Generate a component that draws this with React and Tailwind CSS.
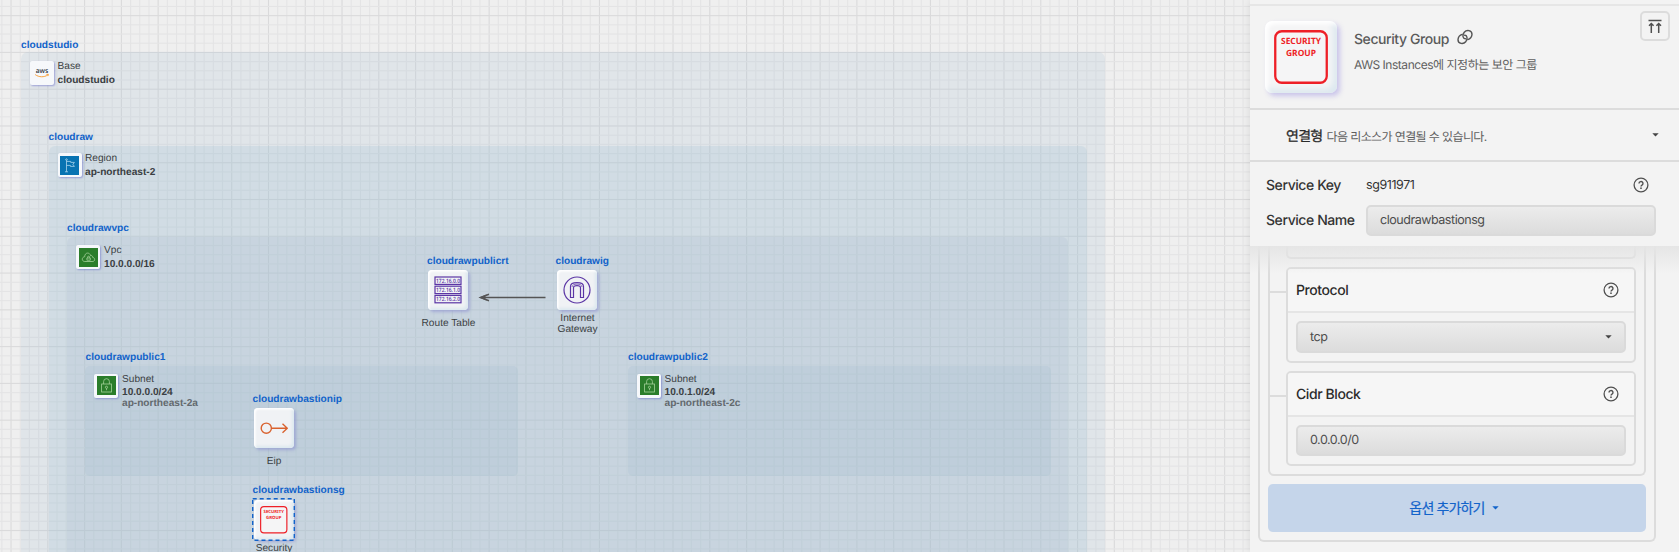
import React from "react";

const PITCH = 9.194;
const steps = (start, end) => {
  const out = [];
  for (let i = 0; start + i * PITCH < end; i++) out.push(i);
  return out;
};

function Grid() {
  return (
    <svg className="absolute inset-0" width="1250" height="552">
      {steps(1.6, 1250).map((i) => (
        <rect key={i} x={1.6 + i * PITCH - 0.3} y="0" width="1.1" height="552" fill={i % 4 === 1 ? "#dadadb" : "#e4e4e5"} />
      ))}
      {steps(6.2, 552).map((i) => (
        <rect key={i} x="0" y={6.2 + i * PITCH - 0.3} width="1250" height="1.1" fill={i % 4 === 1 ? "#dadadb" : "#e4e4e5"} />
      ))}
    </svg>
  );
}

const Name = ({ at, children }) => (
  <div className={`absolute pt-px whitespace-nowrap text-[10.15px] leading-[10px] font-bold text-[#1263ca] ${at}`}>{children}</div>
);

const Tag = ({ at, title, value, zone, tight }) => (
  <div className={`absolute pt-px whitespace-nowrap text-[10.15px] leading-[10px] text-[#3b3f43] ${at}`}>
    <div>{title}</div>
    <div className={`font-bold ${tight ? "mt-[3px]" : "mt-[4px]"}`}>{value}</div>
    {zone && <div className="mt-px font-bold text-[#63696e]">{zone}</div>}
  </div>
);

const SmallCard = ({ at, children }) => (
  <div className={`absolute flex h-6 w-6 items-center justify-center rounded-[2px] bg-[#f6f8fb] shadow-[1px_1px_2px_rgba(110,115,200,0.6)] ${at}`}>
    {children}
  </div>
);

const Card = ({ at, children }) => (
  <div className={`absolute flex h-10 w-10 items-center justify-center rounded-[4px] bg-[#f0f2f5] shadow-[2px_2px_3px_rgba(125,125,205,0.45),inset_1.5px_1.5px_2px_#fff,inset_-2px_-2px_3px_#dce8ef] ${at}`}>
    {children}
  </div>
);

const Caption = ({ at, children }) => (
  <div className={`absolute w-20 pt-px text-center text-[10.15px] leading-[11px] text-[#3b3f43] ${at}`}>{children}</div>
);

const LockIcon = () => (
  <svg width="19" height="19" viewBox="0 0 19 19" fill="none" stroke="#a5d19b" strokeWidth="0.8">
    <rect width="19" height="19" fill="#2b7d2b" stroke="none" />
    <rect x="4.6" y="8" width="9.8" height="8" />
    <path d="M6.6 8V5.6a2.9 2.9 0 0 1 5.8 0V8" />
    <circle cx="9.5" cy="11.3" r="1.1" />
    <path d="M9.5 12.4v1.8" />
  </svg>
);

const SecurityGroupIcon = ({ size }) => (
  <svg width={size} height={size} viewBox="0 0 54 54">
    <rect x="1.25" y="1.25" width="51.5" height="51.5" rx="6.5" fill="#f5f5f6" stroke="#ee1f27" strokeWidth="2.3" />
    <g fill="#ee1f27" fontFamily="'Noto Sans', sans-serif" fontWeight="700" fontSize="8.6" textAnchor="middle">
      <text x="27" y="13.5" textLength="40" lengthAdjust="spacingAndGlyphs">SECURITY</text>
      <text x="27" y="25.5" textLength="30" lengthAdjust="spacingAndGlyphs">GROUP</text>
    </g>
  </svg>
);

const Help = () => (
  <svg width="16" height="16" viewBox="0 0 16 16" fill="none" stroke="#505050" strokeWidth="1.3">
    <circle cx="8" cy="8" r="6.9" />
    <path d="M6 6.5a2 1.9 0 1 1 3 1.6c-.7.4-1 .7-1 1.4" strokeWidth="1.4" />
    <circle cx="8" cy="11.2" r="0.85" fill="#505050" stroke="none" />
  </svg>
);

const Caret = ({ color }) => (
  <svg width="7" height="4" viewBox="0 0 7 4">
    <path d="M0.3 0.2h6.4L3.5 3.6z" fill={color} />
  </svg>
);

function Canvas() {
  return (
    <main className="relative h-[552px] w-[1250px] shrink-0 overflow-hidden bg-[#efefef] font-['Liberation_Sans',sans-serif] [text-rendering:geometricPrecision]">
      <Grid />
      <div className="absolute top-[52px] left-[21px] h-[520px] w-[1084px] rounded-[7px] bg-[#a6bed2]/20" />
      <div className="absolute top-[145.5px] left-[48.5px] h-[520px] w-[1038px] rounded-[6px] bg-[#9dbfd2]/22" />
      <div className="absolute top-[237px] left-[67px] h-[520px] w-[1001px] rounded-[6px] bg-[#a8bccb]/22" />
      <div className="absolute top-[366px] left-[85px] h-[110px] w-[433px] rounded-[5px] bg-[#9fbccb]/22" />
      <div className="absolute top-[366px] left-[628px] h-[110px] w-[423px] rounded-[5px] bg-[#9fbccb]/22" />

      <Name at="left-[21px] top-[40px]">cloudstudio</Name>
      <SmallCard at="left-[30px] top-[61px]">
        <svg width="16" height="12" viewBox="0 0 16 12">
          <text x="8" y="6" textAnchor="middle" fontFamily="'Open Sans', sans-serif" fontWeight="600" fontSize="6.8" fill="#2c3644" textLength="12.6" lengthAdjust="spacingAndGlyphs">aws</text>
          <path d="M1.2 7.6C5 10.4 10 10.4 13.8 8M12.4 7.4l2-.1-.5 1.8" fill="none" stroke="#f7a13c" strokeWidth="1" />
        </svg>
      </SmallCard>
      <Tag at="left-[57.5px] top-[61px]" title="Base" value="cloudstudio" />

      <Name at="left-[48.5px] top-[132px]">cloudraw</Name>
      <SmallCard at="left-[57.5px] top-[153px]">
        <svg width="19" height="19" viewBox="0 0 19 19" fill="none" stroke="#a9d4ec" strokeWidth="0.8">
          <rect width="19" height="19" fill="#0873b2" stroke="none" />
          <circle cx="6.5" cy="3.6" r="0.8" />
          <path d="M6.5 4.4v11.4M5 15.8h3M6.5 5.4h4.2v1h3.7l-1.5 2 1.5 2h-4v-1H6.5" />
        </svg>
      </SmallCard>
      <Tag at="left-[85px] top-[153px]" title="Region" value="ap-northeast-2" />

      <Name at="left-[67px] top-[223px]">cloudrawvpc</Name>
      <SmallCard at="left-[76px] top-[245px]">
        <svg width="19" height="19" viewBox="0 0 19 19" fill="none" stroke="#a5d19b" strokeWidth="0.8">
          <rect width="19" height="19" fill="#2b7d2b" stroke="none" />
          <path d="M5.3 13.5h8.6c2.4-.3 2.3-3.8-.3-4.2 0-1.7-1.1-2-1.9-1.5C10.8 3.9 5.6 4.2 5.7 8.7 2.4 9.2 2.7 13 5.3 13.5z" />
          <path d="M7.9 10h3.4v2.2H7.9zM8.6 10V9.2a1 1 0 0 1 2 0V10" />
        </svg>
      </SmallCard>
      <Tag at="left-[104px] top-[245px]" title="Vpc" value="10.0.0.0/16" />

      <Name at="left-[427px] top-[256px]">cloudrawpublicrt</Name>
      <Card at="left-[428px] top-[269.5px]">
        <svg className="overflow-visible" width="28" height="28" viewBox="0 0 28 28" fill="none" stroke="#5b35a5" strokeWidth="1.2">
          <rect x="1" y="1" width="26" height="7.4" />
          <rect x="1" y="10.2" width="26" height="7.4" />
          <rect x="1" y="19.4" width="26" height="7.4" />
          <g stroke="none" fill="#5b35a5" fontFamily="'Open Sans', sans-serif" fontWeight="600" fontSize="5.8" textAnchor="middle">
            <text x="14" y="6.8" textLength="24" lengthAdjust="spacingAndGlyphs">172.16.0.0</text>
            <text x="14" y="16" textLength="24" lengthAdjust="spacingAndGlyphs">172.16.1.0</text>
            <text x="14" y="25.2" textLength="24" lengthAdjust="spacingAndGlyphs">172.16.2.0</text>
          </g>
        </svg>
      </Card>
      <Caption at="left-[408.5px] top-[317px]">Route Table</Caption>

      <svg className="absolute top-[290px] left-[476px]" width="72" height="15" viewBox="0 0 72 15" fill="none" stroke="#555" strokeWidth="1.5">
        <path d="M5 7.5h64.5M13 4.3L4.5 7.5l8.5 3.2" />
        <path d="M3 7.5l8-3.2-2.5 3.2 2.5 3.2z" fill="#555" stroke="none" />
      </svg>

      <Name at="left-[555.5px] top-[256px]">cloudrawig</Name>
      <Card at="left-[557px] top-[269.5px]">
        <svg width="28" height="28" viewBox="0 0 28 28" fill="none" stroke="#5b35a5" strokeWidth="1.2">
          <circle cx="14" cy="14" r="13" />
          <path d="M7.5 21.5V10.5C7.5 8 10 6.7 14 6.7s6.5 1.3 6.5 3.8v11h-3V11.5c0-1.2-1.5-1.9-3.5-1.9s-3.5.7-3.5 1.9v10z" />
          <path d="M9 11c0-1.8 2-2.9 5-2.9s5 1.1 5 2.9" strokeWidth="0.7" />
        </svg>
      </Card>
      <Caption at="left-[537.5px] top-[312px]">
        Internet
        <br />
        Gateway
      </Caption>

      <Name at="left-[85.5px] top-[352px]">cloudrawpublic1</Name>
      <SmallCard at="left-[94px] top-[373.5px]"><LockIcon /></SmallCard>
      <Tag at="left-[122px] top-[374px]" title="Subnet" value="10.0.0.0/24" zone="ap-northeast-2a" tight />

      <Name at="left-[628px] top-[352px]">cloudrawpublic2</Name>
      <SmallCard at="left-[637px] top-[373.5px]"><LockIcon /></SmallCard>
      <Tag at="left-[664.5px] top-[374px]" title="Subnet" value="10.0.1.0/24" zone="ap-northeast-2c" tight />

      <Name at="left-[252.5px] top-[394px]">cloudrawbastionip</Name>
      <Card at="left-[254px] top-[407.5px]">
        <svg width="28" height="28" viewBox="0 0 28 28" fill="none" stroke="#d9622f" strokeWidth="1.4">
          <circle cx="6.3" cy="14.2" r="5.1" />
          <path d="M11.4 14.2h16M22.5 9.7l4.8 4.5-4.8 4.5" />
        </svg>
      </Card>
      <Caption at="left-[234px] top-[455px]">Eip</Caption>

      <Name at="left-[252.5px] top-[485px]">cloudrawbastionsg</Name>
      <Card at="left-[254px] top-[500px]"><SecurityGroupIcon size={27.5} /></Card>
      <svg className="absolute top-[498px] left-[252px]" width="43" height="43">
        <rect x="0.7" y="0.7" width="41.6" height="41.6" fill="none" stroke="#1263ca" strokeWidth="1.4" strokeDasharray="4 3" />
      </svg>
      <Caption at="left-[234px] top-[542px]">Security</Caption>
    </main>
  );
}

const Field = ({ className, icon, children }) => (
  <div className={`flex items-center justify-between rounded-[5px] border-2 border-[#dadada] bg-linear-to-b from-[#ececec] to-[#dcdcdc] px-3 text-[12.5px] tracking-[-0.46px] text-[#4c4c4c] ${className}`}>
    <span className="pt-[2px]">{children}</span>
    {icon}
  </div>
);

const Property = ({ label, children }) => (
  <section className="flex">
    <div className="mt-6 h-0.5 w-4 bg-[#dcdcdc]" />
    <div className="w-[350px] overflow-hidden rounded-[5px] border-2 border-[#dcdcdc]">
      <header className="flex h-11 items-center justify-between border-b-2 border-[#e5e5e5] bg-[#f6f6f6] pr-[15px] pl-2 text-sm font-medium text-[#2b2b2b]">
        <span className="pt-[2px]">{label}</span>
        <Help />
      </header>
      <div className="p-2">{children}</div>
    </div>
  </section>
);

function Panel() {
  return (
    <aside className="relative flex h-[552px] w-[429px] shrink-0 flex-col overflow-hidden bg-[#f3f3f3] font-['Inter','Noto_Sans_CJK_KR',sans-serif] tracking-[-0.42px] shadow-[0_0_8px_rgba(0,0,0,0.1)] [text-rendering:geometricPrecision]">
      <div className="mt-1 flex h-[106px] shrink-0 border-t-2 border-b-2 border-t-[#e6e6e6] border-b-[#dcdcdc] pl-[15px]">
        <div className="mt-[15px] flex h-[72px] w-[72px] items-center justify-center rounded-[7px] bg-[#f5f5f6] tracking-normal shadow-[3px_3px_5px_rgba(150,140,225,0.45),inset_3px_3px_4px_#fff,inset_-4px_-4px_6px_#dce8ef]">
          <SecurityGroupIcon size={54} />
        </div>
        <div className="flex-1 pt-[23px] pl-[17px]">
          <h1 className="flex h-5 items-center gap-2 text-sm font-medium text-[#5a5a5a]">
            <span className="pt-[2px]">Security Group</span>
            <svg className="-mt-1" width="16" height="16" viewBox="0 0 16 16" fill="none" stroke="#555" strokeWidth="1.4" strokeLinecap="round">
              <path d="M10.8 10.6C15.8 9 16.4 2.6 12 1.600 8 .800 5.400 4.600 6.100 7.900 6.400 9.200 7.300 9.900 8.400 9.800" />
              <path d="M5.200 5.400C.200 7-.400 13.400 4 14.400 8 15.200 10.600 11.400 9.900 8.100 9.600 6.800 8.700 6.100 7.600 6.200" />
            </svg>
          </h1>
          <p className="mt-2 text-[12px] leading-4 tracking-[-0.47px] text-[#5f5f5f]">AWS Instances에 지정하는 보안 그룹</p>
        </div>
        <button className="mt-[5px] mr-[9px] flex h-[30px] w-[30px] items-center justify-center rounded-[5px] border-2 border-[#dcdcdc]">
          <svg width="14" height="15" viewBox="0 0 14 15" fill="none" stroke="#505050" strokeWidth="1.5">
            <path d="M0.5 1.5h13M3.3 14V5M10.7 14V5M1 6.8l2.3-2.3 2.3 2.3M8.4 6.8l2.3-2.3L13 6.8" />
          </svg>
        </button>
      </div>
      <div className="flex h-[52px] shrink-0 items-center border-b-2 border-[#dcdcdc] pr-5 pl-9">
        <span className="pt-[3px] text-sm font-normal tracking-[-0.7px] text-[#2b2b2b] [-webkit-text-stroke:0.3px_#2b2b2b]">연결형</span>
        <span className="ml-[4px] flex-1 pt-[3px] text-[12px] tracking-[-0.6px] text-[#5f5f5f]">다음 리소스가 연결될 수 있습니다.</span>
        <Caret color="#444" />
      </div>
      <div className="relative z-10 h-[84px] shrink-0 bg-[#f3f3f3] pt-[13px] pr-[23px] pl-4">
        <div className="flex h-5 items-center pr-[7px] text-[#333]">
          <span className="w-[100px] pt-[2px] text-sm font-medium">Service Key</span>
          <span className="flex-1 pt-[3px] text-[12.5px]">sg911971</span>
          <Help />
        </div>
        <div className="mt-[10px] flex items-center text-[#333]">
          <span className="w-[100px] text-sm font-medium">Service Name</span>
          <Field className="h-[31px] flex-1">cloudrawbastionsg</Field>
        </div>
        <div className="absolute top-full left-0 h-7 w-full bg-linear-to-b from-[#e5e5e5] to-[#f3f3f3]/0" />
      </div>
      <div className="mx-2 w-[398px] rounded-b-[6px] border-2 border-t-0 border-[#dcdcdc] px-2 pb-2">
        <div className="flex flex-col gap-2 rounded-b-[6px] border-2 border-t-0 border-[#dcdcdc] pb-2">
          <div className="ml-4 h-[13px] w-[350px] rounded-b-[5px] border-2 border-t-0 border-[#dcdcdc]" />
          <Property label="Protocol">
            <Field className="h-8" icon={<Caret color="#444" />}>tcp</Field>
          </Property>
          <Property label="Cidr Block">
            <Field className="h-[31px]">0.0.0.0/0</Field>
          </Property>
        </div>
        <button className="mt-2 flex h-12 w-full items-center justify-center gap-[7px] rounded-[5px] bg-[#c5d5ea] pr-[6px] text-sm font-normal tracking-[-0.85px] text-[#1263ca] [-webkit-text-stroke:0.2px_#1263ca]">
          옵션 추가하기
          <Caret color="#1263ca" />
        </button>
      </div>
    </aside>
  );
}

export default function App() {
  return (
    <div className="flex h-[552px] w-[1679px] overflow-hidden">
      <Canvas />
      <Panel />
    </div>
  );
}
